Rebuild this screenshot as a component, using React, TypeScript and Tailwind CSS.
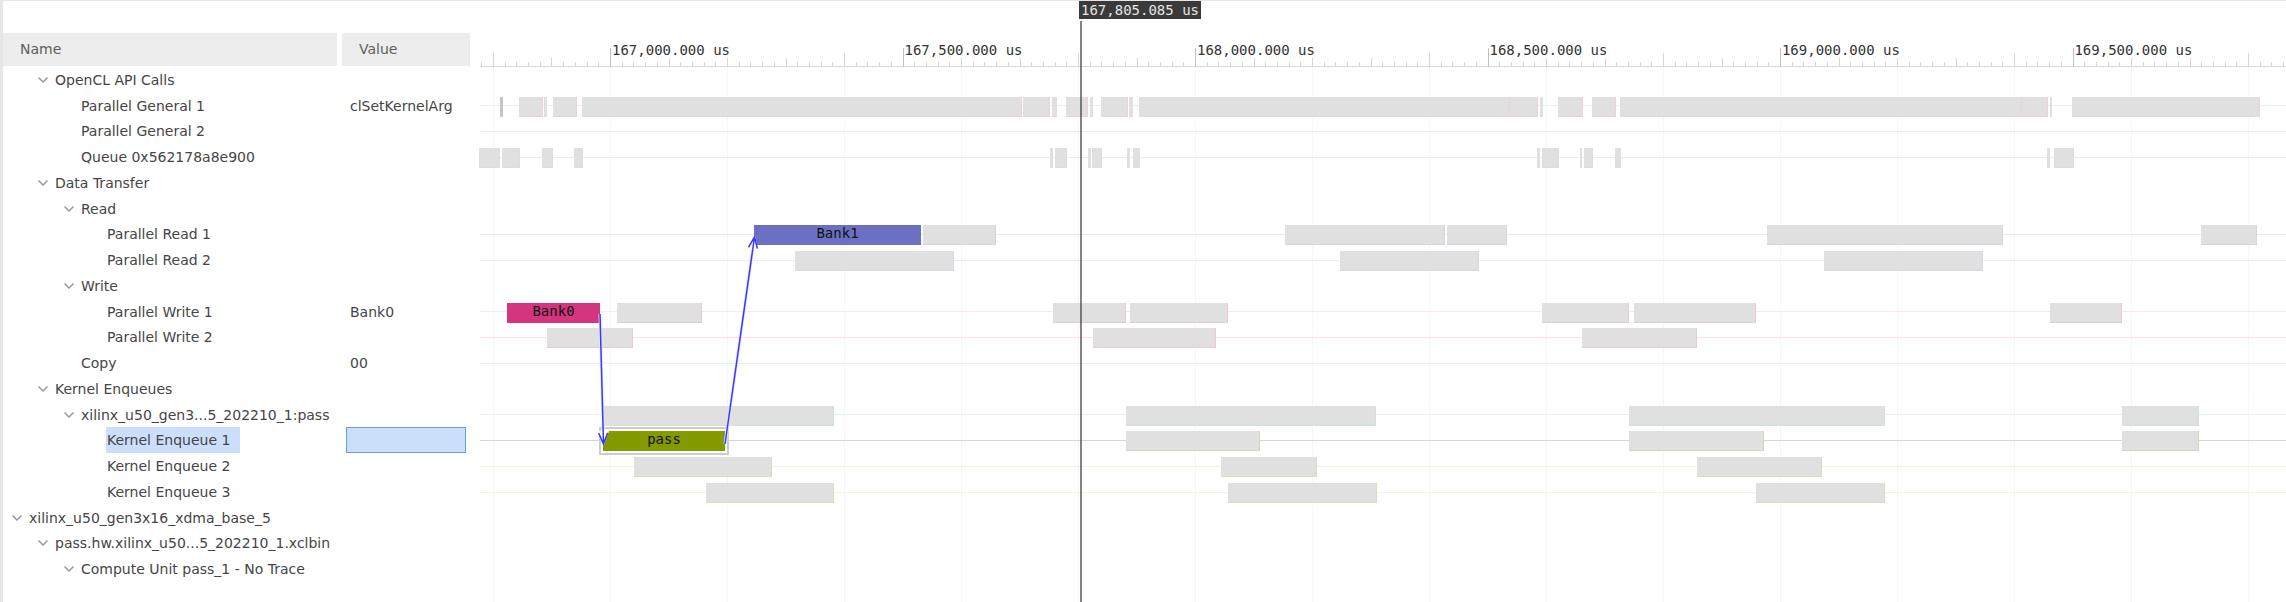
import React from "react";

type Row = {
  name: string;
  level: number;
  branch?: boolean;
  value?: string;
  selected?: boolean;
};

type Bar = { from: number; to: number; label?: string; fill?: string; selected?: boolean };

type Lane = { line: string; edge: string; bars: Bar[] };

const rows: Row[] = [
  { name: "OpenCL API Calls", level: 1, branch: true },
  { name: "Parallel General 1", level: 2, value: "clSetKernelArg" },
  { name: "Parallel General 2", level: 2 },
  { name: "Queue 0x562178a8e900", level: 2 },
  { name: "Data Transfer", level: 1, branch: true },
  { name: "Read", level: 2, branch: true },
  { name: "Parallel Read 1", level: 3 },
  { name: "Parallel Read 2", level: 3 },
  { name: "Write", level: 2, branch: true },
  { name: "Parallel Write 1", level: 3, value: "Bank0" },
  { name: "Parallel Write 2", level: 3 },
  { name: "Copy", level: 2, value: "00" },
  { name: "Kernel Enqueues", level: 1, branch: true },
  { name: "xilinx_u50_gen3...5_202210_1:pass", level: 2, branch: true },
  { name: "Kernel Enqueue 1", level: 3, selected: true },
  { name: "Kernel Enqueue 2", level: 3 },
  { name: "Kernel Enqueue 3", level: 3 },
  { name: "xilinx_u50_gen3x16_xdma_base_5", level: 0, branch: true },
  { name: "pass.hw.xilinx_u50...5_202210_1.xclbin", level: 1, branch: true },
  { name: "Compute Unit pass_1 - No Trace", level: 2, branch: true },
];

const indent = ["pl-[9px]", "pl-[35px]", "pl-[61px]", "pl-[87px]"];
const rowHeight = "h-[26px] nth-[4n+2]:h-[25px]";

/* Visible range of the time axis, in axis units. */
const VIEW_START = 478;
const VIEW_SPAN = 1808;
const UNITS_PER_US = 0.585;
const pct = (x: number) => `${((x - VIEW_START) / VIEW_SPAN) * 100}%`;
const pctSpan = (w: number) => `${(w / VIEW_SPAN) * 100}%`;
const timeToAxis = (us: number) => 610 + (us - 167000) * UNITS_PER_US;

const spans = (pairs: [number, number][]): Bar[] => pairs.map(([from, to]) => ({ from, to }));

const lanes: (Lane | null)[] = [
  null,
  {
    line: "bg-[#e9efef]",
    edge: "border-[#ead6d0]",
    bars: [
      { from: 500, to: 503, fill: "bg-[#c6c6c6]" },
      ...spans([
        [519, 543], [544, 547], [553, 577], [582, 1022], [1023, 1050], [1052, 1057],
        [1066, 1088], [1090, 1093], [1101, 1128], [1129, 1133], [1139, 1510],
        [1510, 1538], [1540, 1543], [1558, 1583], [1592, 1616], [1620, 2022],
        [2022, 2048], [2050, 2052], [2072, 2260],
      ]),
    ],
  },
  { line: "bg-[#e6efed]", edge: "border-[#d5e0da]", bars: [] },
  {
    line: "bg-[#e6efed]",
    edge: "border-[#d5e2d5]",
    bars: spans([
      [479, 500], [502, 520], [542, 553], [574, 583], [1050, 1053], [1055, 1067],
      [1088, 1091], [1092, 1102], [1127, 1130], [1133, 1140], [1537, 1540],
      [1542, 1559], [1580, 1582], [1584, 1593], [1615, 1621], [2047, 2050], [2054, 2074],
    ]),
  },
  null,
  null,
  {
    line: "bg-[#e6e9f7]",
    edge: "border-[#d2d6e4]",
    bars: [
      { from: 754, to: 921, label: "Bank1", fill: "bg-[#6b70c3]" },
      ...spans([[923, 996], [1285, 1445], [1447, 1507], [1767, 2003], [2201, 2257]]),
    ],
  },
  {
    line: "bg-[#ebebfa]",
    edge: "border-[#d2d9e2]",
    bars: spans([[795, 954], [1340, 1479], [1824, 1983]]),
  },
  null,
  {
    line: "bg-[#fbe6ea]",
    edge: "border-[#ecc9cf]",
    bars: [
      { from: 507, to: 600, label: "Bank0", fill: "bg-[#d3357f]" },
      ...spans([[617, 702], [1053, 1126], [1130, 1228], [1542, 1629], [1634, 1756], [2050, 2122]]),
    ],
  },
  {
    line: "bg-[#fbe0e5]",
    edge: "border-[#ecc9cf]",
    bars: spans([[547, 633], [1093, 1216], [1582, 1697]]),
  },
  { line: "bg-[#e3efed]", edge: "border-[#d2e2de]", bars: [] },
  null,
  {
    line: "bg-[#e3f2ef]",
    edge: "border-[#cfe2db]",
    bars: spans([[603, 834], [1126, 1376], [1629, 1885], [2122, 2199]]),
  },
  {
    line: "bg-[#d6d6d6]",
    edge: "border-[#d3d4b8]",
    bars: [
      { from: 603, to: 725, label: "pass", fill: "bg-[#849a00]", selected: true },
      ...spans([[1126, 1260], [1629, 1764], [2122, 2199]]),
    ],
  },
  {
    line: "bg-[#f2f4e2]",
    edge: "border-[#dcdcb8]",
    bars: spans([[634, 772], [1221, 1317], [1697, 1822]]),
  },
  {
    line: "bg-[#f1f4de]",
    edge: "border-[#dcdcb8]",
    bars: spans([[706, 834], [1228, 1377], [1756, 1885]]),
  },
  null,
  null,
  null,
];

const ticks = Array.from({ length: 155 }, (_, i) => 166780 + i * 20);
const gridTimes = Array.from({ length: 16 }, (_, i) => 166800 + i * 200);
const labels = [167000, 167500, 168000, 168500, 169000, 169500];

function tickHeight(us: number) {
  if (us % 500 === 0) return 19;
  if (us % 200 === 0) return 14;
  return us % 100 === 0 ? 9 : 5;
}

function Chevron() {
  return (
    <svg viewBox="0 0 10 6" className="block h-1.5 w-2.5" fill="none" stroke="#999999" strokeWidth="1.5">
      <path d="M0.5 0.5 L5 5 L9.5 0.5" />
    </svg>
  );
}

function HeaderCell({ title, gap }: { title: string; gap?: boolean }) {
  return (
    <th className={`p-0 pb-px font-normal ${gap ? "pr-[5px]" : ""}`}>
      <div className="flex h-[33px] items-center bg-[#ededed] pl-[17px] text-[#5e5e5e]">{title}</div>
    </th>
  );
}

function SignalTable() {
  return (
    <table className="w-[467px] table-fixed border-collapse text-left text-[#454545]">
      <colgroup>
        <col className="w-[339px]" />
        <col className="w-[128px]" />
      </colgroup>
      <thead>
        <tr>
          <HeaderCell title="Name" gap />
          <HeaderCell title="Value" />
        </tr>
      </thead>
      <tbody>
        {rows.map((row) => (
          <tr key={row.name} className={rowHeight}>
            <td className="p-0">
              <div className={`flex items-center whitespace-nowrap ${indent[row.level]}`}>
                <span className="flex w-4 shrink-0">
                  {row.branch && (
                    <button type="button" aria-expanded="true" aria-label={`Collapse ${row.name}`}>
                      <Chevron />
                    </button>
                  )}
                </span>
                <span className={row.selected ? "bg-[#cbdffd] pr-2.5 pl-px leading-[26px]" : "pl-px leading-5"}>
                  {row.name}
                </span>
              </div>
            </td>
            <td className="px-1 py-0">
              {row.selected ? (
                <div className="h-[26px] border border-[#5aa5d6] bg-[#cbdefa]" />
              ) : (
                <div className="pl-1 leading-5">{row.value}</div>
              )}
            </td>
          </tr>
        ))}
      </tbody>
    </table>
  );
}

function RulerLabels() {
  return (
    <div className="relative z-10 flex h-4 overflow-hidden font-['DejaVu_Sans_Mono',monospace] text-[14px] leading-4 text-[#333333]">
      <div className="shrink-0" style={{ width: pct(timeToAxis(labels[0]) + 2) }} />
      {labels.map((t) => (
        <div key={t} className="shrink-0 whitespace-nowrap" style={{ width: pctSpan(500 * UNITS_PER_US) }}>
          <span className="inline-block bg-white">
            {t.toLocaleString("en-US", { minimumFractionDigits: 3 })} us
          </span>
        </div>
      ))}
    </div>
  );
}

function RulerTicks() {
  return (
    <svg className="-mt-[11px] block h-5 w-full" shapeRendering="crispEdges" aria-hidden="true">
      <rect x="2" y="19" width="100%" height="1" fill="#d9d9d9" />
      {[...ticks, ...gridTimes.map((t) => t + 100), ...labels].map((t, i) => (
        <rect
          key={i}
          x={pct(timeToAxis(t))}
          y={20 - tickHeight(t)}
          width="1"
          height={tickHeight(t)}
          fill={t % 500 === 0 ? "#c2c2c2" : "#d6d6d6"}
        />
      ))}
    </svg>
  );
}

function Gridlines() {
  return (
    <svg className="absolute inset-0 h-full w-full" shapeRendering="crispEdges" aria-hidden="true">
      {gridTimes.map((t) => (
        <rect key={t} x={pct(timeToAxis(t))} y="0" width="1" height="100%" fill="#f6f6f6" />
      ))}
    </svg>
  );
}

function BarBlock({ bar, edge }: { bar: Bar; edge: string }) {
  const wide = bar.to - bar.from > 8;
  const look = bar.fill ?? `border-b bg-[#e0e0e0] ${edge} ${wide ? "border-r" : ""}`;
  const ring = bar.selected ? "outline-2 outline-offset-2 outline-[#cdcdcd]" : "";
  return (
    <div
      className={`absolute top-1 h-5 ${look} ${ring}`}
      style={{ left: pct(bar.from), width: pctSpan(bar.to - bar.from) }}
    >
      {bar.label && (
        <div className="text-center font-['DejaVu_Sans_Mono',monospace] text-[14px] leading-4 text-[#111111]">
          {bar.label}
        </div>
      )}
    </div>
  );
}

function LaneRow({ lane }: { lane: Lane | null }) {
  return (
    <li className={`relative flex items-center pl-0.5 ${rowHeight}`}>
      {lane && <div className={`h-px flex-1 ${lane.line}`} />}
      {lane?.bars.map((bar) => <BarBlock key={bar.from} bar={bar} edge={lane.edge} />)}
    </li>
  );
}

function Arrow({ x1, y1, x2, y2 }: { x1: number; y1: number; x2: number; y2: number }) {
  const ends = { x1: pct(x1), y1, x2: pct(x2), y2 };
  return (
    <>
      <line {...ends} stroke="#e6e6ff" strokeWidth="3" />
      <line {...ends} stroke="#3838ff" strokeWidth="1.5" markerEnd="url(#arrow-head)" />
    </>
  );
}

function Dependencies() {
  return (
    <svg className="pointer-events-none absolute inset-0 h-full w-full" aria-hidden="true">
      <defs>
        <marker
          id="arrow-head"
          markerUnits="userSpaceOnUse"
          markerWidth="16"
          markerHeight="14"
          refX="13"
          refY="7"
          orient="auto"
        >
          <path d="M0 1 L15 7 L0 13 Z" fill="#ffffff" />
          <path d="M2 2.5 L13 7 L2 11.5 M0 7 H13" fill="none" stroke="#3838ff" strokeWidth="1.5" />
        </marker>
      </defs>
      <Arrow x1={600} y1={247} x2={603.5} y2={377} />
      <Arrow x1={725} y1={377} x2={754.5} y2={170} />
    </svg>
  );
}

function Timeline() {
  return (
    <section aria-label="Timeline" className="relative ml-2 flex min-w-0 flex-1 flex-col overflow-hidden pt-[41px]">
      <RulerLabels />
      <RulerTicks />
      <div className="relative flex-1">
        <Gridlines />
        <ol>
          {lanes.map((lane, i) => (
            <LaneRow key={i} lane={lane} />
          ))}
        </ol>
        <Dependencies />
      </div>
      <div className="absolute inset-y-0 z-20 flex flex-col items-start" style={{ left: pct(1079) }}>
        <div className="bg-[#3a3a3a] px-0.5 font-['DejaVu_Sans_Mono',monospace] text-[14px] leading-[18px] whitespace-nowrap text-[#e6e6e6]">
          167,805.085 us
        </div>
        <div className="mt-0.5 ml-px w-0.5 flex-1 bg-[#404040]/65" />
      </div>
    </section>
  );
}

export default function App() {
  return (
    <main className="flex min-h-screen border-t border-l-[3px] border-t-[#e6e6e6] border-l-[#e6e6e6] bg-white font-['DejaVu_Sans',sans-serif] text-[14px]">
      <div className="shrink-0 pt-8">
        <SignalTable />
      </div>
      <Timeline />
    </main>
  );
}
